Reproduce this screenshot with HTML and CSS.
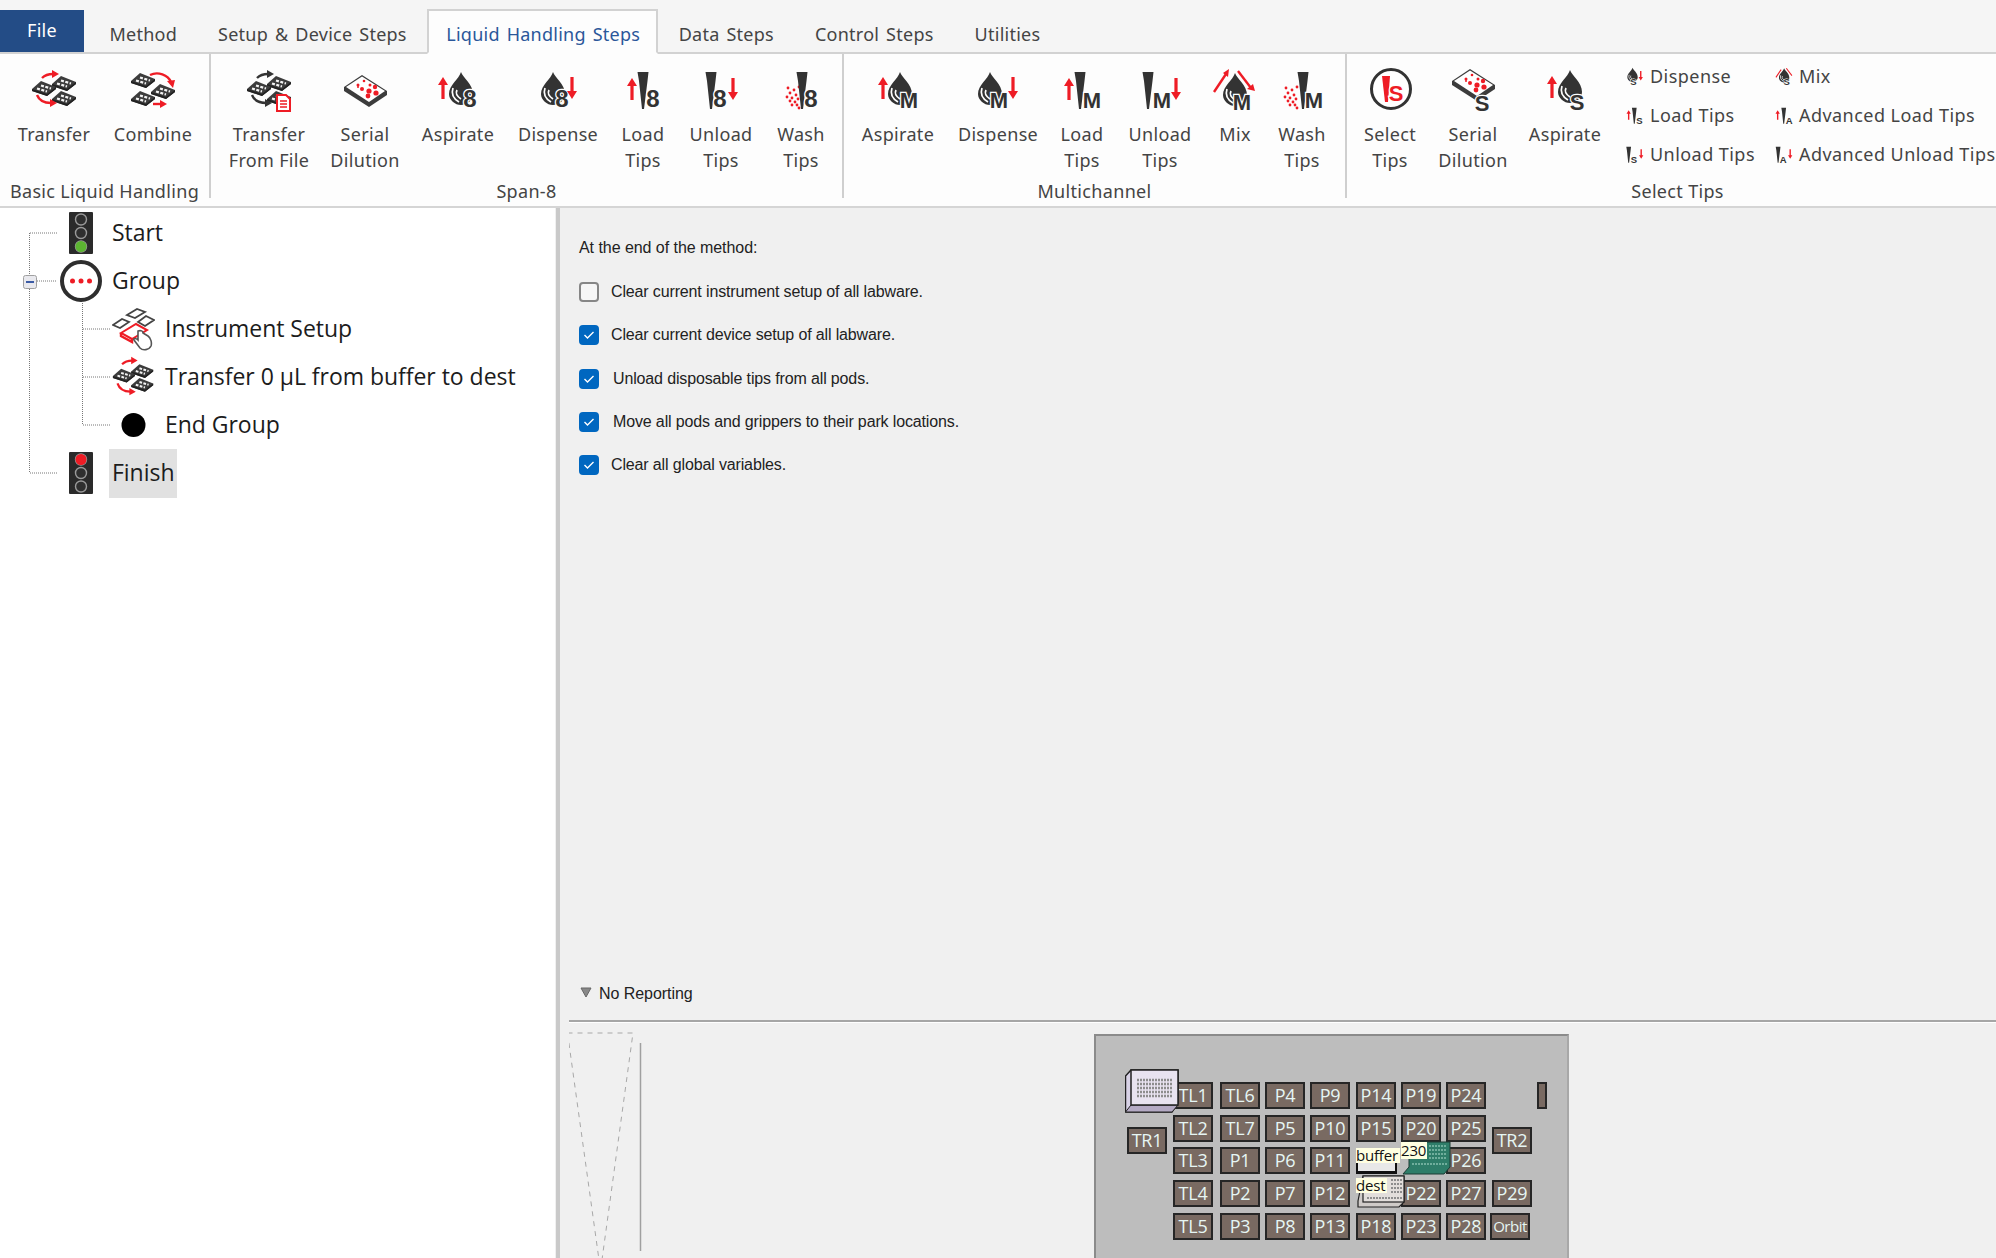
FILE: index.html
```html
<!DOCTYPE html>
<html lang="en">
<head>
<meta charset="utf-8">
<title>Method Editor</title>
<link rel="stylesheet" href="styles.css">
</head>
<body>
<svg class="defs" width="0" height="0" aria-hidden="true">
  <defs>
    <g id="au"><polygon class="r" points="0,0 5,8 1.6,8 1.6,22 -1.6,22 -1.6,8 -5,8"/></g>
    <g id="ad"><polygon class="r" points="0,22 5,14 1.6,14 1.6,0 -1.6,0 -1.6,14 -5,14"/></g>
    <g id="drop">
      <path class="d" d="M0 0C2 6 12 12 12 22C12 29 5 33 0 33C-6 33 -12 28 -12 22C-12 13 -2 7 0 0Z"/>
      <path class="halo" d="M-8 16C-10 22 -7 27 -2 30"/>
      <path class="halo" d="M-4 18C-6 22 -3 25 0 27"/>
    </g>
    <polygon id="tip" class="d" points="-5.5,0 5.5,0 4.5,9 1,37 -1,37 -4,9"/>
    <g id="dots" class="r">
      <circle cx="1" cy="1" r="1.4"/><circle cx="7" cy="3" r="1.4"/><circle cx="12" cy="0" r="1.4"/>
      <circle cx="3" cy="6" r="1.4"/><circle cx="9" cy="8" r="1.4"/><circle cx="0" cy="10" r="1.4"/>
      <circle cx="5" cy="11" r="1.4"/><circle cx="11" cy="12" r="1.4"/><circle cx="3" cy="14" r="1.4"/>
      <circle cx="8" cy="15" r="1.4"/><circle cx="5" cy="18" r="1.4"/><circle cx="10" cy="18" r="1.4"/>
      <circle cx="12" cy="21" r="1.4"/>
    </g>
    <g id="plate">
      <polygon class="pl" points="-12,1 -3,-7 12,-1 12,1 3,8 -12,3"/>
      <polygon class="k" points="-12,1 3,6 12,-1 12,1 3,8 -12,3"/>
      <path class="spots" d="M-7 0.500L3 3.500M-3 -2.500L7 0.500"/>
    </g>
    <g id="bigplate">
      <polygon class="pl" points="0,12 18,0 43,16 43,20 25,32 0,16"/>
      <polygon class="w" points="2,12 18,1.500 41,16 25,27"/>
      <g class="r">
        <circle cx="14" cy="10" r="1.5"/><circle cx="20" cy="6" r="1.3"/><circle cx="26" cy="10" r="1.5"/>
        <circle cx="18" cy="14" r="2"/><circle cx="25" cy="16" r="2.6"/><circle cx="31" cy="12" r="2.2"/>
        <circle cx="24" cy="21" r="2.4"/><circle cx="32" cy="18" r="2.6"/><circle cx="14" cy="12" r="1"/>
      </g>
    </g>
    <g id="plates3a"><use href="#plate" x="40" y="15"/><use href="#plate" x="20" y="20"/><use href="#plate" x="40" y="30"/></g>
    <g id="plates3b"><use href="#plate" x="20" y="12"/><use href="#plate" x="40" y="23"/><use href="#plate" x="20" y="30"/></g>
    <g id="traffic-body">
      <rect class="k2" width="24" height="42" rx="1"/>
      <circle class="lamp" cx="12" cy="7.5" r="5.5"/><circle class="lamp" cx="12" cy="21" r="5.5"/><circle class="lamp" cx="12" cy="34.500" r="5.5"/>
    </g>
  </defs>
</svg>

<div class="app">
  <nav class="tabs">
    <span class="tab-file">File</span>
    <span class="tab tab-first">Method</span>
    <span class="tab">Setup &amp; Device Steps</span>
    <span class="tab tab-active">Liquid Handling Steps</span>
    <span class="tab">Data Steps</span>
    <span class="tab">Control Steps</span>
    <span class="tab">Utilities</span>
  </nav>

  <section class="ribbon">
    <div class="group group-basic">
      <div class="btns">
        <div class="btn">
          <svg class="ico" viewBox="0 0 60 44"><use href="#plates3a"/><path class="rs" d="M18 10C21 7 25 6 29 6"/><polygon class="r" points="28,2 35,6 28,10"/><path class="rs" d="M13 27C15 32 20 35 27 35"/><polygon class="r" points="26,31 33,35 26,39"/></svg>
          <span>Transfer</span>
        </div>
        <div class="btn">
          <svg class="ico" viewBox="0 0 60 44"><use href="#plates3b"/><path class="rs" d="M27 7C35 3 45 7 48 14"/><polygon class="r" points="44,13 52,12 50,20"/><path class="rs" d="M30 36H38"/><polygon class="r" points="37,32 44,36 37,40"/></svg>
          <span>Combine</span>
        </div>
      </div>
      <div class="group-label">Basic Liquid Handling</div>
    </div>

    <div class="group group-span">
      <div class="btns">
        <div class="btn">
          <svg class="ico" viewBox="0 0 60 44"><use href="#plates3a"/><path class="ds" d="M18 10C21 7 25 6 29 6"/><polygon class="d" points="28,2 35,6 28,10"/><path class="ds" d="M13 27C15 32 20 35 27 35"/><polygon class="d" points="26,31 33,35 26,39"/><path class="file" d="M38 27H47L51 31V43H38Z"/><path class="file-l" d="M41 33H48M41 36H48M41 39H48"/></svg>
          <span>Transfer<br>From File</span>
        </div>
        <div class="btn">
          <svg class="ico" viewBox="0 0 60 44"><use href="#bigplate" x="9" y="7"/></svg>
          <span>Serial<br>Dilution</span>
        </div>
        <div class="btn">
          <svg class="ico" viewBox="0 0 60 44"><use href="#au" x="15" y="9"/><use href="#drop" x="33" y="4"/><text class="lt" x="42" y="39">8</text></svg>
          <span>Aspirate</span>
        </div>
        <div class="btn">
          <svg class="ico" viewBox="0 0 60 44"><use href="#drop" x="25" y="4"/><text class="lt" x="34" y="39">8</text><use href="#ad" x="44" y="9"/></svg>
          <span>Dispense</span>
        </div>
        <div class="btn">
          <svg class="ico" viewBox="0 0 60 44"><use href="#au" x="19" y="10"/><use href="#tip" x="30" y="4"/><text class="lt" x="40" y="39">8</text></svg>
          <span>Load<br>Tips</span>
        </div>
        <div class="btn">
          <svg class="ico" viewBox="0 0 60 44"><use href="#tip" x="20" y="4"/><text class="lt" x="29" y="39">8</text><use href="#ad" x="42" y="10"/></svg>
          <span>Unload<br>Tips</span>
        </div>
        <div class="btn">
          <svg class="ico" viewBox="0 0 60 44"><use href="#dots" x="16" y="19"/><use href="#tip" x="31" y="4"/><text class="lt" x="40" y="39">8</text></svg>
          <span>Wash<br>Tips</span>
        </div>
      </div>
      <div class="group-label">Span-8</div>
    </div>

    <div class="group group-multi">
      <div class="btns">
        <div class="btn">
          <svg class="ico" viewBox="0 0 60 44"><use href="#au" x="15" y="9"/><use href="#drop" x="32" y="4"/><text class="lt lm" x="41" y="40">M</text></svg>
          <span>Aspirate</span>
        </div>
        <div class="btn">
          <svg class="ico" viewBox="0 0 60 44"><use href="#drop" x="22" y="4"/><text class="lt lm" x="31" y="40">M</text><use href="#ad" x="45" y="9"/></svg>
          <span>Dispense</span>
        </div>
        <div class="btn">
          <svg class="ico" viewBox="0 0 60 44"><use href="#au" x="17" y="10"/><use href="#tip" x="28" y="4"/><text class="lt lm" x="40" y="40">M</text></svg>
          <span>Load<br>Tips</span>
        </div>
        <div class="btn">
          <svg class="ico" viewBox="0 0 60 44"><use href="#tip" x="18" y="4"/><text class="lt lm" x="32" y="40">M</text><use href="#ad" x="46" y="10"/></svg>
          <span>Unload<br>Tips</span>
        </div>
        <div class="btn">
          <svg class="ico" viewBox="0 0 60 44"><path class="rs" d="M9 24L21 6"/><polygon class="r" points="18,5 24,1 23,9"/><path class="rs" d="M33 3L46 20"/><polygon class="r" points="42,21 50,23 48,16"/><use href="#drop" x="30" y="5"/><text class="lt lm" x="37" y="42">M</text></svg>
          <span>Mix</span>
        </div>
        <div class="btn">
          <svg class="ico" viewBox="0 0 60 44"><use href="#dots" x="13" y="19"/><use href="#tip" x="31" y="4"/><text class="lt lm" x="42" y="40">M</text></svg>
          <span>Wash<br>Tips</span>
        </div>
      </div>
      <div class="group-label">Multichannel</div>
    </div>

    <div class="group group-select">
      <div class="btns">
        <div class="btn">
          <svg class="ico" viewBox="0 0 60 44"><circle class="ring" cx="31" cy="21" r="19.500"/><polygon class="r" points="22,8 30,8 28,34 25,34"/><text class="lt ls ltr" x="36" y="33">S</text></svg>
          <span>Select<br>Tips</span>
        </div>
        <div class="btn">
          <svg class="ico" viewBox="0 0 60 44"><use href="#bigplate" x="9" y="1"/><text class="lt ls" x="39" y="43">S</text></svg>
          <span>Serial<br>Dilution</span>
        </div>
        <div class="btn">
          <svg class="ico" viewBox="0 0 60 44"><use href="#au" x="17" y="8"/><use href="#drop" x="35" y="2"/><text class="lt ls" x="42" y="42">S</text></svg>
          <span>Aspirate</span>
        </div>
        <div class="small-col">
          <div class="small"><svg class="sico" viewBox="0 0 60 44"><use href="#drop" x="22" y="2"/><text class="lt ls" x="24" y="42">S</text><use href="#ad" x="41" y="9"/></svg><span>Dispense</span></div>
          <div class="small"><svg class="sico" viewBox="0 0 60 44"><use href="#au" x="13" y="10"/><use href="#tip" x="26" y="4"/><text class="lt ls" x="38" y="42">S</text></svg><span>Load Tips</span></div>
          <div class="small"><svg class="sico" viewBox="0 0 60 44"><use href="#tip" x="13" y="4"/><text class="lt ls" x="25" y="42">S</text><use href="#ad" x="42" y="10"/></svg><span>Unload Tips</span></div>
        </div>
        <div class="small-col small-col-2">
          <div class="small"><svg class="sico" viewBox="0 0 60 44"><path class="rs" d="M9 24L21 6"/><path class="rs" d="M33 3L46 20"/><use href="#drop" x="28" y="3"/><text class="lt ls" x="34" y="42">S</text></svg><span>Mix</span></div>
          <div class="small"><svg class="sico" viewBox="0 0 60 44"><use href="#au" x="13" y="10"/><use href="#tip" x="27" y="4"/><text class="lt ls" x="40" y="42">A</text></svg><span>Advanced Load Tips</span></div>
          <div class="small"><svg class="sico" viewBox="0 0 60 44"><use href="#tip" x="14" y="4"/><text class="lt ls" x="26" y="42">A</text><use href="#ad" x="42" y="10"/></svg><span>Advanced Unload Tips</span></div>
        </div>
      </div>
      <div class="group-label">Select Tips</div>
    </div>
  </section>

  <main class="main">
    <aside class="tree">
      <svg class="connectors" width="120" height="290" aria-hidden="true">
        <path class="dot" d="M29.500 25V265M30 25H57M37 73H57M30 265H57M82.500 95V217M83 121H110M83 169H110M83 217H110"/>
        <rect class="exp" x="23.500" y="67.500" width="13" height="13" rx="2"/>
        <path class="exp-m" d="M26 74H34"/>
      </svg>
      <div class="row">
        <svg class="n-ico" width="42" height="42" viewBox="-9 0 42 42"><use href="#traffic-body"/><circle class="green" cx="12" cy="34.500" r="5.500"/></svg>
        <span class="n-label">Start</span>
      </div>
      <div class="row">
        <svg class="n-ico" width="42" height="42" viewBox="0 0 42 42"><circle class="group-ring" cx="21" cy="21" r="19"/><circle class="r" cx="12.500" cy="21" r="2.500"/><circle class="r" cx="21" cy="21" r="2.500"/><circle class="r" cx="29.500" cy="21" r="2.500"/></svg>
        <span class="n-label">Group</span>
      </div>
      <div class="row row-child">
        <svg class="n-ico" width="43" height="44" viewBox="0 0 43 44">
          <path class="tile" d="M1 18L10 12L17 15L8 21ZM15 8L25 2L33 5L23 11ZM26 15L34 9L42 13L33 19Z"/>
          <path class="tile-r" d="M9 26L24 17L35 23L20 32Z"/>
          <path class="tile-e" d="M9 26V29L20 35V32"/>
          <path class="hand" d="M26 24C29 23 31 24 31 26L36 29C39 31 40 36 39 39C37 43 31 44 28 41L22 33C21 31 24 31 26 33Z"/>
        </svg>
        <span class="n-label">Instrument Setup</span>
      </div>
      <div class="row row-child">
        <svg class="n-ico" width="43" height="44" viewBox="7 0 47 48"><use href="#plates3a" transform="translate(0 2)"/><path class="rs" d="M18 10C21 7 25 6 29 6"/><polygon class="r" points="28,2 35,6 28,10"/><path class="rs" d="M13 31C15 37 20 40 27 40"/><polygon class="r" points="26,36 33,40 26,44"/></svg>
        <span class="n-label">Transfer 0 µL from buffer to dest</span>
      </div>
      <div class="row row-child">
        <svg class="n-ico" width="43" height="24" viewBox="0 0 43 24"><circle class="end" cx="21.500" cy="12" r="12"/></svg>
        <span class="n-label">End Group</span>
      </div>
      <div class="row">
        <svg class="n-ico" width="42" height="42" viewBox="-9 0 42 42"><use href="#traffic-body"/><circle class="r" cx="12" cy="7.500" r="5.500"/></svg>
        <span class="n-label n-selected">Finish</span>
      </div>
    </aside>

    <div class="splitter"></div>

    <div class="panel">
      <div class="form">
        <p class="form-title">At the end of the method:</p>
        <div class="checks">
          <label class="check"><span class="box"></span>Clear current instrument setup of all labware.</label>
          <label class="check"><span class="box box-on"><svg width="12" height="10" viewBox="0 0 12 10"><path class="tick" d="M1.500 5L4.500 8L10.500 2"/></svg></span>Clear current device setup of all labware.</label>
          <label class="check check-u"><span class="box box-on"><svg width="12" height="10" viewBox="0 0 12 10"><path class="tick" d="M1.500 5L4.500 8L10.500 2"/></svg></span>Unload disposable tips from all pods.</label>
          <label class="check check-u"><span class="box box-on"><svg width="12" height="10" viewBox="0 0 12 10"><path class="tick" d="M1.500 5L4.500 8L10.500 2"/></svg></span>Move all pods and grippers to their park locations.</label>
          <label class="check"><span class="box box-on"><svg width="12" height="10" viewBox="0 0 12 10"><path class="tick" d="M1.500 5L4.500 8L10.500 2"/></svg></span>Clear all global variables.</label>
        </div>
      </div>

      <div class="reporting">
        <svg class="caret" width="12" height="11" viewBox="0 0 12 11"><path class="caret-p" d="M1 1H11L6 10Z"/></svg>
        <span>No Reporting</span>
      </div>

      <div class="lower">
        <svg class="funnel" width="80" height="238" viewBox="0 0 80 238" aria-hidden="true">
          <path class="dash" d="M1.500 2H67L35 236M1.500 2L34 236"/>
          <path class="vline" d="M74.500 12V220"/>
        </svg>
        <div class="deck">
          <div class="slots">
            <span class="slot-gap"></span><span class="slot">TL1</span><span class="slot">TL6</span><span class="slot">P4</span><span class="slot">P9</span><span class="slot">P14</span><span class="slot">P19</span><span class="slot">P24</span><span class="slot-gap"></span><span class="slot slot-thin"></span>
            <span class="slot slot-tr">TR1</span><span class="slot">TL2</span><span class="slot">TL7</span><span class="slot">P5</span><span class="slot">P10</span><span class="slot">P15</span><span class="slot">P20</span><span class="slot">P25</span><span class="slot slot-tr">TR2</span><span class="slot-gap"></span>
            <span class="slot">TL3</span><span class="slot">P1</span><span class="slot">P6</span><span class="slot">P11</span><span class="slot-gap"></span><span class="slot-gap"></span><span class="slot">P26</span><span class="slot-gap"></span>
            <span class="slot-gap"></span><span class="slot">TL4</span><span class="slot">P2</span><span class="slot">P7</span><span class="slot">P12</span><span class="slot-gap"></span><span class="slot">P22</span><span class="slot">P27</span><span class="slot">P29</span><span class="slot-gap"></span>
            <span class="slot-gap"></span><span class="slot">TL5</span><span class="slot">P3</span><span class="slot">P8</span><span class="slot">P13</span><span class="slot">P18</span><span class="slot">P23</span><span class="slot">P28</span><span class="slot slot-orbit">Orbit</span>
          </div>

          <svg class="lab lab-tips" width="54" height="44" viewBox="0 0 54 44">
            <path class="lab-side" d="M0.500 7L6 1H53V34L47 43H0.500Z"/>
            <path class="lab-bottom" d="M0.500 43L6 36H53L47 43Z"/>
            <rect class="lab-top" x="6" y="1" width="47" height="35"/>
            <path class="lab-dots" d="M12 11H47M12 15H47M12 19H47M12 23H47M12 27H47"/>
          </svg>
          <svg class="lab lab-green" width="49" height="35" viewBox="0 0 49 35">
            <path class="g-side" d="M1 33L7 26V1H48V26L42 33Z"/>
            <path class="g-dots" d="M27 5H45M27 9H45M27 13H45M27 17H45M10 23H45"/>
          </svg>
          <div class="lab lab-bracket"></div>
          <svg class="lab lab-dest" width="48" height="33" viewBox="0 0 48 33">
            <path class="d-side" d="M1 32V26L6 1H47V27L42 32Z"/>
            <rect class="d-top" x="6" y="1" width="41" height="26"/>
            <path class="d-dots" d="M34 5H45M34 9H45M34 13H45M34 17H45M10 23H45"/>
          </svg>
          <span class="lab tag tag-buffer">buffer</span>
          <span class="lab tag tag-230">230</span>
          <span class="lab tag tag-dest">dest</span>
        </div>
      </div>
    </div>
  </main>
</div>
</body>
</html>
```

FILE: styles.css
```css
html, body {
  margin: 0;
  padding: 0;
  height: 100%;
  overflow: hidden;
  background: #f0f0f0;
}
.defs { position: absolute; }
.app {
  width: 1996px;
  height: 1258px;
  display: flex;
  flex-direction: column;
  font-family: "Noto Sans", "Open Sans", sans-serif;
  overflow: hidden;
}

/* tabs */
.tabs {
  height: 52px;
  flex: none;
  display: flex;
  align-items: flex-end;
  background: #f5f5f5;
  border-bottom: 2px solid #d2d2d2;
  font-size: 18px;
  letter-spacing: 0.25px;
  word-spacing: 2px;
  color: #444;
}
.tab-file {
  width: 84px;
  height: 42px;
  line-height: 40px;
  text-align: center;
  background: #234c86;
  color: #fff;
}
.tab {
  height: 42px;
  line-height: 48px;
  padding: 0 20.5px;
  white-space: nowrap;
}
.tab-first { margin-left: 5px; }
.tab-active {
  height: 41px;
  margin-bottom: -2px;
  padding: 0 16px 0 17px;
  line-height: 46px;
  background: #fdfdfd;
  color: #2b579a;
  border: 2px solid #d2d2d2;
  border-bottom: 2px solid #fdfdfd;
}

/* ribbon */
.ribbon {
  height: 152px;
  flex: none;
  display: flex;
  background: #fdfdfd;
  border-bottom: 2px solid #d5d5d5;
  color: #444;
  font-size: 18px;
  letter-spacing: 0.33px;
  line-height: 26px;
}
.group {
  height: 144px;
  flex: none;
  box-sizing: border-box;
  border-right: 2px solid #cfcfcf;
}
.btns {
  height: 124px;
  display: grid;
  align-items: start;
}
.btn {
  padding-top: 14px;
  display: flex;
  flex-direction: column;
  align-items: center;
  text-align: center;
  white-space: nowrap;
}
.ico {
  width: 60px;
  height: 44px;
  margin-bottom: 9px;
  flex: none;
  overflow: visible;
}
.group-label {
  text-align: center;
  white-space: nowrap;
}
.group-basic { width: 211px; }
.group-basic .btns { grid-template-columns: 108px 90px; }
.group-span { width: 633px; }
.group-span .btns {
  padding-left: 10px;
  grid-template-columns: 96px 96px 90px 110px 60px 96px 64px;
}
.group-multi { width: 503px; }
.group-multi .btns {
  padding-left: 4px;
  grid-template-columns: 100px 100px 68px 88px 62px 72px;
}
.group-select {
  width: 649px;
  border-right: 0;
}
.group-select .btns {
  padding-left: 3px;
  grid-template-columns: 80px 86px 98px 155px auto;
  margin-right: -20px;
}
.group-select .group-label { padding-left: 12px; }
.small-col {
  display: flex;
  flex-direction: column;
  padding: 9px 0 0 9px;
  row-gap: 13px;
  letter-spacing: 0.45px;
}
.small-col-2 { padding-left: 3px; }
.small {
  display: flex;
  align-items: center;
  height: 26px;
  white-space: nowrap;
}
.sico {
  width: 26px;
  height: 19px;
  margin-right: 1px;
  flex: none;
  overflow: visible;
}

/* icon paints */
.r { fill: #ee1c25; }
.d { fill: #333; }
.k { fill: #222; }
.k2 { fill: #2a2a2a; }
.w { fill: #fff; }
.pl { fill: #3c3c3c; }
.rs { fill: none; stroke: #ee1c25; stroke-width: 2.4; }
.ds { fill: none; stroke: #333; stroke-width: 2.4; }
.halo { fill: none; stroke: #fdfdfd; stroke-width: 1.7; }
.spots { fill: none; stroke: #f4f4f4; stroke-width: 2.2; stroke-dasharray: 3 1.500; }
.lt {
  font-family: "Liberation Sans", sans-serif;
  font-size: 24px;
  font-weight: 700;
  fill: #333;
  stroke: #fdfdfd;
  stroke-width: 2.5px;
  paint-order: stroke;
  text-anchor: middle;
  letter-spacing: 0;
}
.lm { font-size: 22px; }
.ls { font-size: 22px; }
.ltr { fill: #ee1c25; }
.file { fill: #fff; stroke: #ee1c25; stroke-width: 2; }
.file-l { fill: none; stroke: #ee1c25; stroke-width: 1.5; }
.ring { fill: #fff; stroke: #333; stroke-width: 3; }
.lamp { fill: #2f2f2f; stroke: #9a9a9a; stroke-width: 1.4; }
.green { fill: #5cb531; }
.group-ring { fill: #fff; stroke: #2e2e2e; stroke-width: 4; }
.tile { fill: #fff; stroke: #444; stroke-width: 1.8; }
.tile-r { fill: #fff; stroke: #ee1c25; stroke-width: 2; }
.tile-e { fill: none; stroke: #ee1c25; stroke-width: 2.4; }
.hand { fill: #fff; stroke: #555; stroke-width: 1.6; }
.end { fill: #000; }

/* main */
.main {
  flex: 1;
  min-height: 0;
  display: flex;
}

/* tree */
.tree {
  position: relative;
  width: 555px;
  flex: none;
  box-sizing: border-box;
  padding-top: 1px;
  background: #fff;
  font-family: "Open Sans", "Noto Sans", sans-serif;
  font-size: 23px;
  letter-spacing: -0.03px;
  color: #1c1c1c;
}
.connectors {
  position: absolute;
  left: 0;
  top: 0;
}
.dot {
  fill: none;
  stroke: #777;
  stroke-width: 1;
  stroke-dasharray: 1 1;
}
.exp { fill: #e9e9ee; stroke: #a0a0a0; }
.exp-m { fill: none; stroke: #3b5ba5; stroke-width: 2; }
.row {
  position: relative;
  height: 48px;
  display: flex;
  align-items: center;
  padding-left: 60px;
  white-space: nowrap;
}
.row-child { padding-left: 112px; }
.n-ico {
  flex: none;
  margin-right: 10px;
}
.n-label { padding-bottom: 2px; }
.n-selected {
  height: 49px;
  line-height: 47px;
  box-sizing: border-box;
  margin-left: -3px;
  padding: 0 3px;
  background: #e1e1e1;
}

/* splitter */
.splitter {
  width: 4px;
  flex: none;
  margin-left: 1px;
  background: #c9c9c9;
}

/* right panel */
.panel {
  flex: 1;
  min-width: 0;
  display: flex;
  flex-direction: column;
  background: #f0f0f0;
  font-family: "Liberation Sans", Arial, sans-serif;
  font-size: 16px;
  letter-spacing: -0.05px;
  color: #222;
}
.form {
  height: 774px;
  flex: none;
  padding-left: 19px;
  box-sizing: border-box;
}
.form-title {
  margin: 0;
  padding-top: 28px;
  line-height: 24px;
}
.checks {
  margin-top: 10.5px;
  display: grid;
  grid-auto-rows: 43.25px;
  letter-spacing: -0.14px;
}
.check {
  display: flex;
  align-items: center;
  white-space: nowrap;
}
.check-u .box { margin-right: 14px; }
.box {
  width: 20px;
  height: 20px;
  flex: none;
  margin-right: 12px;
  box-sizing: border-box;
  border: 2px solid #868686;
  border-radius: 4px;
  background: #f6f6f6;
  display: flex;
  align-items: center;
  justify-content: center;
}
.box-on {
  background: #0067c0;
  border-color: #0067c0;
}
.tick {
  fill: none;
  stroke: #fff;
  stroke-width: 1.4;
}
.reporting {
  height: 24px;
  flex: none;
  display: flex;
  align-items: center;
  padding-left: 20px;
  column-gap: 7px;
}
.caret { margin-top: -4px; }
.caret-p { fill: #888; stroke: #666; }

/* lower deck area */
.lower {
  margin: 14px 0 0 9px;
  flex: 1;
  min-height: 0;
  display: flex;
  border-top: 2px solid #a6a6a6;
  box-shadow: inset 0 1px 0 #fff;
  overflow: hidden;
}
.funnel {
  flex: none;
  margin: 9px 0 0 -3px;
}
.dash {
  fill: none;
  stroke: #a8a8a8;
  stroke-width: 1;
  stroke-dasharray: 5 5;
}
.vline {
  fill: none;
  stroke: #a0a0a0;
  stroke-width: 1.5;
}
.deck {
  position: relative;
  width: 475px;
  height: 240px;
  flex: none;
  margin: 12px 0 0 448px;
  box-sizing: border-box;
  padding: 46px 0 0 31px;
  background: #bdbdbd;
  border: 2px solid #8b8b8b;
  border-right-color: #a8a8a8;
  border-bottom: 0;
}
.slots {
  display: grid;
  grid-template-columns: 46px 47px 45px 45px 46px 45px 45px 46px 45px 10px;
  grid-template-rows: 33px 32px 33px 33px 27px;
}
.slot {
  box-sizing: border-box;
  width: 40px;
  height: 27px;
  border: 2px solid #262626;
  background: #796a62;
  color: #e6f6f4;
  font-family: "Open Sans", "Noto Sans", sans-serif;
  font-size: 18px;
  letter-spacing: -0.2px;
  line-height: 23px;
  text-align: center;
  white-space: nowrap;
}
.slot-tr {
  grid-row: span 2;
  margin-top: 12px;
}
.slot-thin { width: 10px; }
.slot-orbit {
  margin-left: -2px;
  font-size: 15px;
  letter-spacing: -0.5px;
}
.lab { position: absolute; }
.lab-tips { left: 29px; top: 33px; }
.lab-side { fill: #d8d2e6; stroke: #222; stroke-width: 1.5; }
.lab-bottom { fill: #b4aac4; stroke: #222; stroke-width: 1; }
.lab-top { fill: #e8e3f0; stroke: #222; stroke-width: 1.5; }
.lab-dots { fill: none; stroke: #8d8d8d; stroke-width: 2.5; stroke-dasharray: 2 1; }
.lab-green { left: 306px; top: 105px; }
.g-side { fill: #2e7d69; stroke: #1c3c34; stroke-width: 1; }
.g-dots { fill: none; stroke: #6fae9c; stroke-width: 2; stroke-dasharray: 2 1; }
.lab-bracket {
  left: 260px;
  top: 127px;
  width: 41px;
  height: 11px;
  box-sizing: border-box;
  background: #e8e8e8;
  border: 2px solid #111;
  border-top: 0;
  border-bottom-width: 3px;
}
.lab-dest { left: 261px; top: 139px; }
.d-side { fill: #cfcbc8; stroke: #222; stroke-width: 1.2; }
.d-top { fill: #e2dedb; stroke: #222; stroke-width: 1.2; }
.d-dots { fill: none; stroke: #8d8d8d; stroke-width: 2; stroke-dasharray: 2 1; }
.tag {
  background: #ffffe1;
  color: #111;
  font-family: "Open Sans", "Noto Sans", sans-serif;
  font-size: 15px;
  letter-spacing: -0.2px;
  line-height: 15px;
  height: 15px;
  white-space: nowrap;
}
.tag-buffer { left: 260px; top: 112px; width: 44px; }
.tag-230 { left: 305px; top: 106px; width: 26px; height: 17px; line-height: 17px; }
.tag-dest { left: 260px; top: 142px; width: 31px; }
```
